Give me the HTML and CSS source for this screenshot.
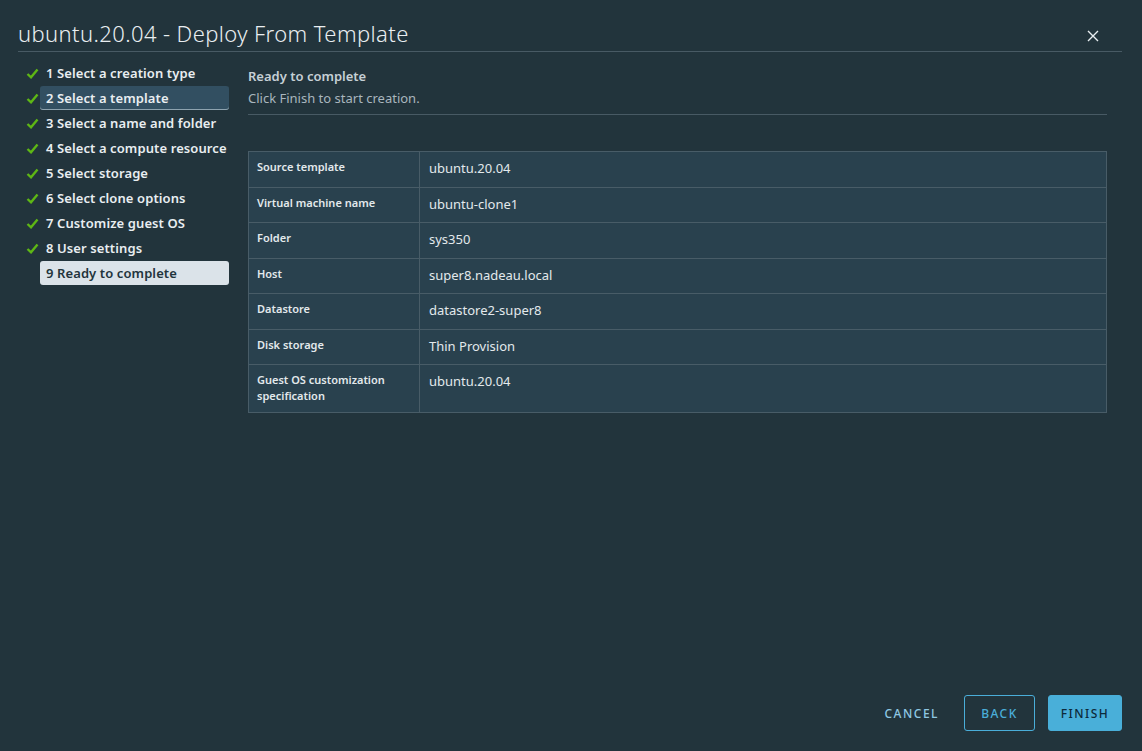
FILE: index.html
```html
<!DOCTYPE html>
<html>
<head>
<meta charset="utf-8">
<link rel="stylesheet" href="styles.css">
</head>
<body>
<div class="modal">
  <header class="header">
    <h1 class="title">ubuntu.20.04 - Deploy From Template</h1>
    <button class="close" aria-label="Close">
      <svg width="12" height="12" viewBox="0 0 12 12"><path d="M1 1L11 11M11 1L1 11" stroke="#e9eef1" stroke-width="1.4" fill="none"/></svg>
    </button>
  </header>
  <div class="body">
    <nav class="steps">
      <div class="step done"><span class="check"><svg width="13" height="11" viewBox="0 0 13 11"><path d="M1.5 6L5 9.3L11.5 1.5" stroke="#5eb715" stroke-width="2.4" fill="none"/></svg></span><span class="label">1 Select a creation type</span></div>
      <div class="step done current"><span class="check"><svg width="13" height="11" viewBox="0 0 13 11"><path d="M1.5 6L5 9.3L11.5 1.5" stroke="#5eb715" stroke-width="2.4" fill="none"/></svg></span><span class="label">2 Select a template</span></div>
      <div class="step done"><span class="check"><svg width="13" height="11" viewBox="0 0 13 11"><path d="M1.5 6L5 9.3L11.5 1.5" stroke="#5eb715" stroke-width="2.4" fill="none"/></svg></span><span class="label">3 Select a name and folder</span></div>
      <div class="step done"><span class="check"><svg width="13" height="11" viewBox="0 0 13 11"><path d="M1.5 6L5 9.3L11.5 1.5" stroke="#5eb715" stroke-width="2.4" fill="none"/></svg></span><span class="label">4 Select a compute resource</span></div>
      <div class="step done"><span class="check"><svg width="13" height="11" viewBox="0 0 13 11"><path d="M1.5 6L5 9.3L11.5 1.5" stroke="#5eb715" stroke-width="2.4" fill="none"/></svg></span><span class="label">5 Select storage</span></div>
      <div class="step done"><span class="check"><svg width="13" height="11" viewBox="0 0 13 11"><path d="M1.5 6L5 9.3L11.5 1.5" stroke="#5eb715" stroke-width="2.4" fill="none"/></svg></span><span class="label">6 Select clone options</span></div>
      <div class="step done"><span class="check"><svg width="13" height="11" viewBox="0 0 13 11"><path d="M1.5 6L5 9.3L11.5 1.5" stroke="#5eb715" stroke-width="2.4" fill="none"/></svg></span><span class="label">7 Customize guest OS</span></div>
      <div class="step done"><span class="check"><svg width="13" height="11" viewBox="0 0 13 11"><path d="M1.5 6L5 9.3L11.5 1.5" stroke="#5eb715" stroke-width="2.4" fill="none"/></svg></span><span class="label">8 User settings</span></div>
      <div class="step active"><span class="check"></span><span class="label">9 Ready to complete</span></div>
    </nav>
    <main class="content">
      <div class="page-head">
        <div class="page-title">Ready to complete</div>
        <div class="page-desc">Click Finish to start creation.</div>
      </div>
      <table class="summary">
        <tr><th>Source template</th><td>ubuntu.20.04</td></tr>
        <tr><th>Virtual machine name</th><td>ubuntu-clone1</td></tr>
        <tr><th>Folder</th><td>sys350</td></tr>
        <tr><th>Host</th><td>super8.nadeau.local</td></tr>
        <tr><th>Datastore</th><td>datastore2-super8</td></tr>
        <tr><th>Disk storage</th><td>Thin Provision</td></tr>
        <tr class="tall"><th>Guest OS customization specification</th><td>ubuntu.20.04</td></tr>
      </table>
    </main>
  </div>
  <footer class="footer">
    <button class="btn btn-link">CANCEL</button>
    <button class="btn btn-outline">BACK</button>
    <button class="btn btn-primary">FINISH</button>
  </footer>
</div>
</body>
</html>
```
FILE: styles.css
```css
* { box-sizing: border-box; }
html, body { margin: 0; height: 100%; }
body {
  background: #22343c;
  font-family: "Noto Sans", "Open Sans", sans-serif;
  color: #e9eef1;
}
.modal {
  height: 751px;
  display: flex;
  flex-direction: column;
  padding: 0 20px 20px 18px;
}
.header {
  display: flex;
  align-items: flex-end;
  justify-content: space-between;
  height: 52px;
  padding-bottom: 3px;
  border-bottom: 1px solid #485a64;
}
.title {
  margin: 0;
  font-weight: 300;
  font-size: 22px;
  line-height: 30px;
  color: #e9eef1;
  letter-spacing: 0.4px;
}
.close {
  background: none;
  border: 0;
  padding: 0;
  margin-right: 23px;
  margin-bottom: 6px;
  width: 12px;
  height: 12px;
  display: flex;
}
.body {
  flex: 1;
  display: flex;
  padding-top: 9px;
}
.steps {
  width: 230px;
  display: flex;
  flex-direction: column;
  gap: 1px;
}
.step {
  display: flex;
  align-items: center;
  height: 24px;
}
.check {
  width: 22px;
  padding-left: 8px;
  display: flex;
  align-items: center;
}
.label {
  flex: 0 0 189px;
  height: 24px;
  line-height: 24px;
  padding-left: 6px;
  border-radius: 3px;
  font-size: 13px;
  font-weight: 600;
  color: #e9eef1;
  white-space: nowrap;
  letter-spacing: 0.1px;
}
.current .label {
  background: #324f61;
  box-shadow: inset 0 -1px 0 #8ea3af;
}
.active .label {
  background: #dbe3e9;
  color: #22343c;
}
.content {
  flex: 1;
  padding-right: 15px;
  padding-top: 3px;
}
.page-head {
  border-bottom: 1px solid #485a64;
  padding-bottom: 5px;
  margin-bottom: 36px;
}
.page-title {
  font-size: 13px;
  font-weight: 600;
  color: #c6d0d6;
  line-height: 22px;
  margin-top: 1px;
}
.page-desc {
  font-size: 13px;
  color: #a9b6be;
  line-height: 22px;
}
.summary {
  width: 100%;
  border-collapse: collapse;
  background: #29414e;
  border: 1px solid #4a5d68;
}
.summary th, .summary td {
  border: 1px solid #485c67;
  vertical-align: top;
  text-align: left;
  height: 35.5px;
}
.summary th {
  width: 171px;
  font-size: 11px;
  font-weight: 600;
  color: #e3e9ec;
  padding: 7px 8px 0 8px;
  line-height: 16px;
}
.summary td {
  font-size: 13px;
  color: #e3e9ec;
  padding: 7px 9px 0 9px;
  line-height: 18px;
}
.summary tr.tall th, .summary tr.tall td { height: 48px; }
.footer {
  display: flex;
  justify-content: flex-end;
  align-items: center;
  gap: 13px;
}
.btn {
  height: 36px;
  font-family: inherit;
  font-size: 12px;
  font-weight: 500;
  letter-spacing: 1.5px;
  border-radius: 3px;
  padding: 0;
  cursor: pointer;
}
.btn-link {
  background: none;
  border: 0;
  color: #8fc8e3;
  padding: 0 12px;
}
.btn-outline {
  background: none;
  border: 1px solid #4aaed9;
  color: #4aaed9;
  width: 71px;
}
.btn-primary {
  background: #49afd9;
  border: 1px solid #49afd9;
  color: #0d2a3b;
  width: 74px;
}
```
